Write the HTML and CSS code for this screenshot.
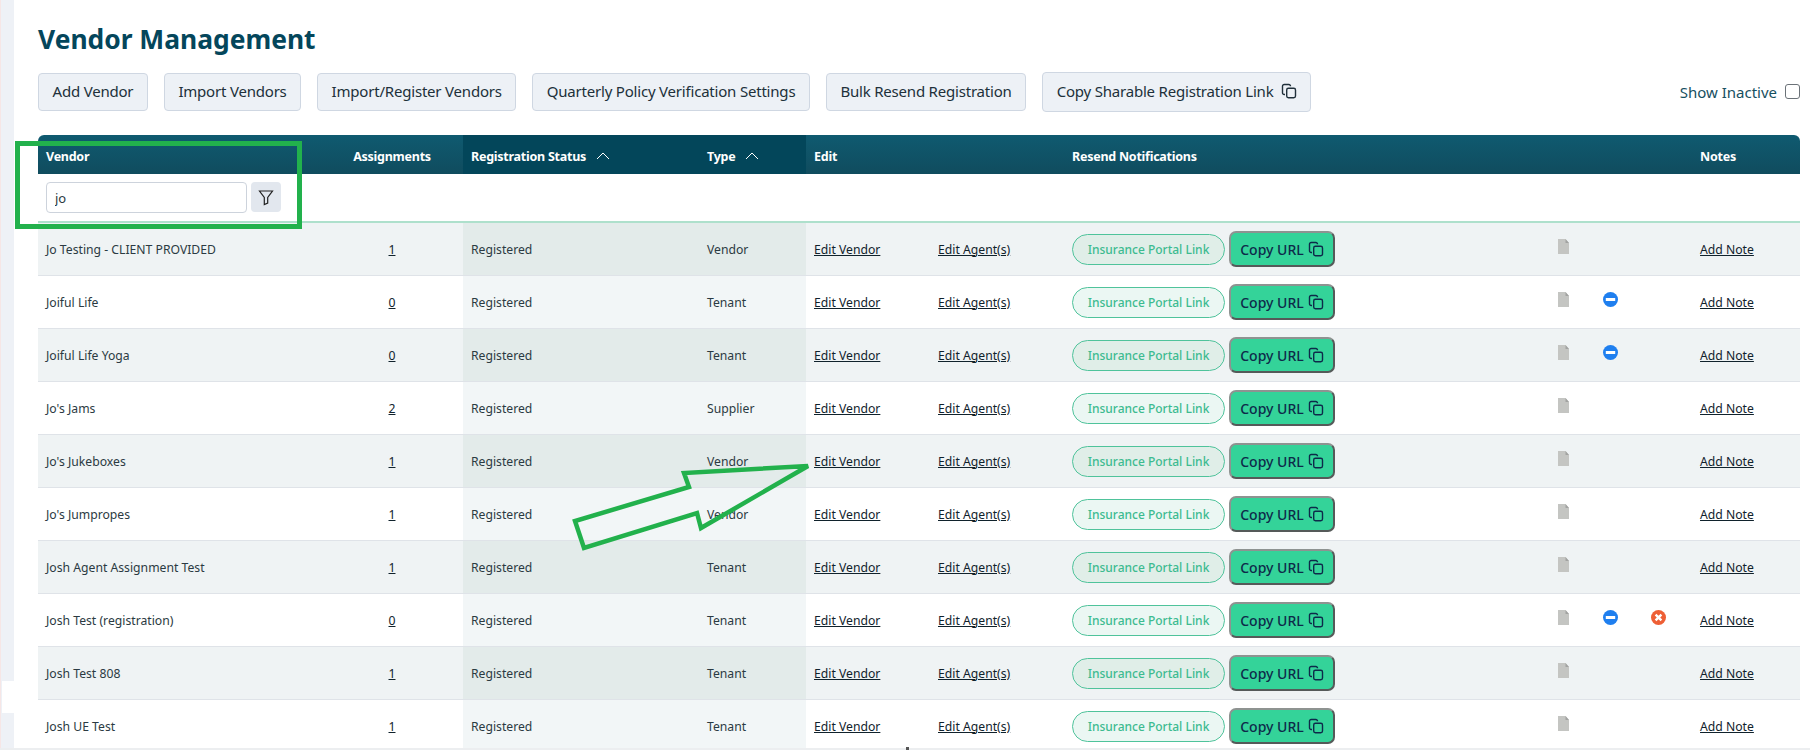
FILE: index.html
```html
<!DOCTYPE html>
<html>
<head>
	<title>Vendor Management</title>
	<link rel="stylesheet" href="styles.css">
</head>
<body>
	<svg class="iconDefs" width="0" height="0">
		<symbol id="iconCopy" viewBox="0 0 16 16">
			<path d="M4 11.5H3.2A1.7 1.7 0 0 1 1.5 9.8V3.2A1.7 1.7 0 0 1 3.2 1.5h4.6A1.7 1.7 0 0 1 9.5 3.2" fill="none" stroke="currentColor" stroke-width="1.4"/>
			<rect x="5.7" y="5.2" width="8.8" height="9.6" rx="1.7" fill="none" stroke="currentColor" stroke-width="1.4"/>
		</symbol>
		<symbol id="iconDoc" viewBox="0 0 11 15">
			<path d="M0 0H7.5L11 4V15H0Z" fill="#c4c5c2"/>
			<path d="M7.5 0L11 4H7.5Z" fill="#a2a3a1"/>
		</symbol>
		<symbol id="iconMinus" viewBox="0 0 15 15">
			<circle cx="7.5" cy="7.5" r="7.5" fill="#1f7fef"/>
			<rect x="2.8" y="6" width="9.4" height="3" fill="#fff"/>
		</symbol>
		<symbol id="iconCross" viewBox="0 0 15 15">
			<circle cx="7.5" cy="7.5" r="7.5" fill="#ee5f35"/>
			<path d="M4.6 4.6L10.4 10.4M10.4 4.6L4.6 10.4" stroke="#fff" stroke-width="2.4"/>
		</symbol>
		<symbol id="iconChevron" viewBox="0 0 14 8">
			<path d="M1 7L7 1L13 7" fill="none" stroke="currentColor" stroke-width="1"/>
		</symbol>
	</svg>

	<div class="sidebar">
		<div class="sidebarGap"></div>
	</div>

	<div class="main">
		<h1 class="pageTitle">Vendor Management</h1>

		<div class="toolbar">
			<button class="toolButton">Add Vendor</button>
			<button class="toolButton">Import Vendors</button>
			<button class="toolButton">Import/Register Vendors</button>
			<button class="toolButton">Quarterly Policy Verification Settings</button>
			<button class="toolButton">Bulk Resend Registration</button>
			<button class="toolButton toolButtonTall">Copy Sharable Registration Link <svg class="iconCopy"><use href="#iconCopy"/></svg></button>
			<label class="showInactive">Show Inactive <input type="checkbox"></label>
		</div>

		<table class="vendorTable">
			<colgroup>
				<col class="colVendor">
				<col class="colAssign">
				<col class="colStatus">
				<col class="colType">
				<col class="colEdit">
				<col class="colAgent">
				<col class="colResend">
				<col class="colDoc">
				<col class="colMinus">
				<col class="colCross">
				<col class="colNotes">
			</colgroup>
			<thead>
				<tr>
					<th>Vendor</th>
					<th class="center">Assignments</th>
					<th class="sorted">Registration Status <svg class="iconSort"><use href="#iconChevron"/></svg></th>
					<th class="sorted">Type <svg class="iconSort"><use href="#iconChevron"/></svg></th>
					<th colspan="2">Edit</th>
					<th colspan="4" class="resendHead">Resend Notifications</th>
					<th>Notes</th>
				</tr>
				<tr class="filterRow">
					<td colspan="11">
						<div class="filterBox">
							<input class="filterInput" type="text" value="jo">
							<button class="filterButton">
								<svg viewBox="0 0 16 16" width="16" height="18"><path d="M1.5 2H14.5L9.7 8.5V14L6.3 15.5V8.5Z" fill="none" stroke="#222" stroke-width="1.2"/></svg>
							</button>
						</div>
					</td>
				</tr>
			</thead>
			<tbody>
				<tr>
					<td>Jo Testing - CLIENT PROVIDED</td>
					<td class="center"><a href="#">1</a></td>
					<td class="sorted">Registered</td>
					<td class="sorted">Vendor</td>
					<td><a href="#">Edit Vendor</a></td>
					<td><a href="#">Edit Agent(s)</a></td>
					<td class="resendCell"><div class="resend"><a class="portalLink">Insurance Portal Link</a><button class="copyUrl">Copy URL <svg class="iconCopy"><use href="#iconCopy"/></svg></button></div></td>
					<td class="iconCell"><svg class="iconDoc"><use href="#iconDoc"/></svg></td>
					<td class="iconCell"></td>
					<td class="iconCell"></td>
					<td><a href="#">Add Note</a></td>
				</tr>
				<tr>
					<td>Joiful Life</td>
					<td class="center"><a href="#">0</a></td>
					<td class="sorted">Registered</td>
					<td class="sorted">Tenant</td>
					<td><a href="#">Edit Vendor</a></td>
					<td><a href="#">Edit Agent(s)</a></td>
					<td class="resendCell"><div class="resend"><a class="portalLink">Insurance Portal Link</a><button class="copyUrl">Copy URL <svg class="iconCopy"><use href="#iconCopy"/></svg></button></div></td>
					<td class="iconCell"><svg class="iconDoc"><use href="#iconDoc"/></svg></td>
					<td class="iconCell"><svg class="iconRound"><use href="#iconMinus"/></svg></td>
					<td class="iconCell"></td>
					<td><a href="#">Add Note</a></td>
				</tr>
				<tr>
					<td>Joiful Life Yoga</td>
					<td class="center"><a href="#">0</a></td>
					<td class="sorted">Registered</td>
					<td class="sorted">Tenant</td>
					<td><a href="#">Edit Vendor</a></td>
					<td><a href="#">Edit Agent(s)</a></td>
					<td class="resendCell"><div class="resend"><a class="portalLink">Insurance Portal Link</a><button class="copyUrl">Copy URL <svg class="iconCopy"><use href="#iconCopy"/></svg></button></div></td>
					<td class="iconCell"><svg class="iconDoc"><use href="#iconDoc"/></svg></td>
					<td class="iconCell"><svg class="iconRound"><use href="#iconMinus"/></svg></td>
					<td class="iconCell"></td>
					<td><a href="#">Add Note</a></td>
				</tr>
				<tr>
					<td>Jo's Jams</td>
					<td class="center"><a href="#">2</a></td>
					<td class="sorted">Registered</td>
					<td class="sorted">Supplier</td>
					<td><a href="#">Edit Vendor</a></td>
					<td><a href="#">Edit Agent(s)</a></td>
					<td class="resendCell"><div class="resend"><a class="portalLink">Insurance Portal Link</a><button class="copyUrl">Copy URL <svg class="iconCopy"><use href="#iconCopy"/></svg></button></div></td>
					<td class="iconCell"><svg class="iconDoc"><use href="#iconDoc"/></svg></td>
					<td class="iconCell"></td>
					<td class="iconCell"></td>
					<td><a href="#">Add Note</a></td>
				</tr>
				<tr>
					<td>Jo's Jukeboxes</td>
					<td class="center"><a href="#">1</a></td>
					<td class="sorted">Registered</td>
					<td class="sorted">Vendor</td>
					<td><a href="#">Edit Vendor</a></td>
					<td><a href="#">Edit Agent(s)</a></td>
					<td class="resendCell"><div class="resend"><a class="portalLink">Insurance Portal Link</a><button class="copyUrl">Copy URL <svg class="iconCopy"><use href="#iconCopy"/></svg></button></div></td>
					<td class="iconCell"><svg class="iconDoc"><use href="#iconDoc"/></svg></td>
					<td class="iconCell"></td>
					<td class="iconCell"></td>
					<td><a href="#">Add Note</a></td>
				</tr>
				<tr>
					<td>Jo's Jumpropes</td>
					<td class="center"><a href="#">1</a></td>
					<td class="sorted">Registered</td>
					<td class="sorted">Vendor</td>
					<td><a href="#">Edit Vendor</a></td>
					<td><a href="#">Edit Agent(s)</a></td>
					<td class="resendCell"><div class="resend"><a class="portalLink">Insurance Portal Link</a><button class="copyUrl">Copy URL <svg class="iconCopy"><use href="#iconCopy"/></svg></button></div></td>
					<td class="iconCell"><svg class="iconDoc"><use href="#iconDoc"/></svg></td>
					<td class="iconCell"></td>
					<td class="iconCell"></td>
					<td><a href="#">Add Note</a></td>
				</tr>
				<tr>
					<td>Josh Agent Assignment Test</td>
					<td class="center"><a href="#">1</a></td>
					<td class="sorted">Registered</td>
					<td class="sorted">Tenant</td>
					<td><a href="#">Edit Vendor</a></td>
					<td><a href="#">Edit Agent(s)</a></td>
					<td class="resendCell"><div class="resend"><a class="portalLink">Insurance Portal Link</a><button class="copyUrl">Copy URL <svg class="iconCopy"><use href="#iconCopy"/></svg></button></div></td>
					<td class="iconCell"><svg class="iconDoc"><use href="#iconDoc"/></svg></td>
					<td class="iconCell"></td>
					<td class="iconCell"></td>
					<td><a href="#">Add Note</a></td>
				</tr>
				<tr>
					<td>Josh Test (registration)</td>
					<td class="center"><a href="#">0</a></td>
					<td class="sorted">Registered</td>
					<td class="sorted">Tenant</td>
					<td><a href="#">Edit Vendor</a></td>
					<td><a href="#">Edit Agent(s)</a></td>
					<td class="resendCell"><div class="resend"><a class="portalLink">Insurance Portal Link</a><button class="copyUrl">Copy URL <svg class="iconCopy"><use href="#iconCopy"/></svg></button></div></td>
					<td class="iconCell"><svg class="iconDoc"><use href="#iconDoc"/></svg></td>
					<td class="iconCell"><svg class="iconRound"><use href="#iconMinus"/></svg></td>
					<td class="iconCell"><svg class="iconRound"><use href="#iconCross"/></svg></td>
					<td><a href="#">Add Note</a></td>
				</tr>
				<tr>
					<td>Josh Test 808</td>
					<td class="center"><a href="#">1</a></td>
					<td class="sorted">Registered</td>
					<td class="sorted">Tenant</td>
					<td><a href="#">Edit Vendor</a></td>
					<td><a href="#">Edit Agent(s)</a></td>
					<td class="resendCell"><div class="resend"><a class="portalLink">Insurance Portal Link</a><button class="copyUrl">Copy URL <svg class="iconCopy"><use href="#iconCopy"/></svg></button></div></td>
					<td class="iconCell"><svg class="iconDoc"><use href="#iconDoc"/></svg></td>
					<td class="iconCell"></td>
					<td class="iconCell"></td>
					<td><a href="#">Add Note</a></td>
				</tr>
				<tr>
					<td>Josh UE Test</td>
					<td class="center"><a href="#">1</a></td>
					<td class="sorted">Registered</td>
					<td class="sorted">Tenant</td>
					<td><a href="#">Edit Vendor</a></td>
					<td><a href="#">Edit Agent(s)</a></td>
					<td class="resendCell"><div class="resend"><a class="portalLink">Insurance Portal Link</a><button class="copyUrl">Copy URL <svg class="iconCopy"><use href="#iconCopy"/></svg></button></div></td>
					<td class="iconCell"><svg class="iconDoc"><use href="#iconDoc"/></svg></td>
					<td class="iconCell"></td>
					<td class="iconCell"></td>
					<td><a href="#">Add Note</a></td>
				</tr>
			</tbody>
		</table>
	</div>

	<!-- annotations drawn on top of the screenshot -->
	<div class="markBox"></div>
	<svg class="markArrow" width="1810" height="750">
		<polygon points="808,466 684,473 689,487 575,521 584,548 697,513 701,528" fill="none" stroke="#22b14c" stroke-width="4.5"/>
	</svg>
	<div class="bottomEdge"><span class="bottomTick"></span></div>
</body>
</html>
```

FILE: styles.css
```css
* {
	box-sizing: border-box;
}

html, body {
	height: 750px;
	margin: 0;
	overflow: hidden;
}

body {
	background: #fff;
	color: #2b3a42;
	display: flex;
	font-family: "Noto Sans", "Open Sans", sans-serif;
	font-size: 12.2px;
}

.iconDefs {
	position: absolute;
}

.sidebar {
	background: #eef1f6;
	border-left: 1px solid #f6e6e6;
	flex: 0 0 14px;
	padding-top: 681px;
}

.sidebarGap {
	background: #fff;
	height: 32px;
	margin-left: 1px;
}

.main {
	flex: 1;
	min-width: 0;
	padding: 0 10px 0 24px;
}

.pageTitle {
	color: #04465b;
	font-size: 26.4px;
	font-weight: 700;
	height: 72px;
	line-height: 36px;
	margin: 0;
	padding-top: 21px;
}

.toolbar {
	align-items: center;
	display: flex;
	gap: 16px;
	height: 39px;
	margin-bottom: 24px;
}

.toolButton {
	align-items: center;
	background: #edf1f6;
	border: 1px solid #cfd7e2;
	border-radius: 4px;
	color: #20303a;
	display: flex;
	font-family: inherit;
	font-size: 15px;
	gap: 7px;
	height: 38px;
	letter-spacing: -0.2px;
	padding: 0 13.5px 2px;
	white-space: nowrap;
}

.toolButtonTall {
	height: 40px;
}

.iconCopy {
	flex: none;
	height: 16px;
	vertical-align: -3px;
	width: 16px;
}

.showInactive {
	align-items: center;
	color: #17505f;
	display: flex;
	font-size: 15px;
	gap: 8px;
	margin-left: auto;
}

.showInactive input {
	appearance: none;
	background: #fff;
	border: 1px solid #6b7278;
	border-radius: 3px;
	height: 15px;
	margin: 0;
	width: 15px;
}

.vendorTable {
	border-collapse: separate;
	border-spacing: 0;
	table-layout: fixed;
	width: 1762px;
}

.colVendor { width: 283px; }
.colAssign { width: 142px; }
.colStatus { width: 236px; }
.colType { width: 107px; }
.colEdit { width: 124px; }
.colAgent { width: 134px; }
.colResend { width: 486px; }
.colDoc { width: 45px; }
.colMinus { width: 48px; }
.colCross { width: 49px; }
.colNotes { width: 108px; }

.vendorTable thead th {
	background: linear-gradient(#0f5a70, #104c5e);
	color: #fff;
	font-size: 12.5px;
	font-weight: 700;
	height: 39px;
	letter-spacing: -0.25px;
	padding: 4px 8px 0;
	text-align: left;
	white-space: nowrap;
}

.vendorTable thead th:first-child {
	border-top-left-radius: 6px;
}

.vendorTable thead th:last-child {
	border-top-right-radius: 6px;
}

.vendorTable thead th.sorted {
	background: #03465a;
}

.vendorTable thead th.center {
	text-align: center;
}

.vendorTable thead th.resendHead {
	padding-left: 8px;
}

.iconSort {
	height: 8px;
	margin-left: 7px;
	vertical-align: 1px;
	width: 14px;
}

.filterRow td {
	border-bottom: 2px solid #aee0cc;
	height: 49px;
	padding: 8px 0 0 8px;
	vertical-align: top;
}

.filterBox {
	align-items: flex-start;
	display: flex;
	gap: 4px;
}

.filterInput {
	border: 1px solid #cdd3dc;
	border-radius: 4px;
	color: #2b3a42;
	font-family: inherit;
	font-size: 13px;
	height: 31px;
	padding: 0 8px;
	width: 201px;
}

.filterButton {
	align-items: center;
	background: #e2e7ee;
	border: 0;
	border-radius: 4px;
	display: flex;
	height: 30px;
	justify-content: center;
	padding: 0;
	width: 30px;
}

.vendorTable tbody td {
	background: #fff;
	border-bottom: 1px solid #dfe3e8;
	height: 53px;
	padding: 0 8px;
	white-space: nowrap;
}

.vendorTable tbody tr:nth-child(odd) td {
	background: #eff3f4;
}

.vendorTable tbody td.sorted {
	background: #f2f6f7;
}

.vendorTable tbody tr:nth-child(odd) td.sorted {
	background: #e3ebea;
}

.vendorTable td.center {
	text-align: center;
}

.vendorTable a[href] {
	color: #10222c;
	text-decoration: underline;
}

.resend {
	align-items: center;
	display: flex;
	gap: 4px;
}

.portalLink {
	background: #ebf7f3;
	border: 1px solid #4fc39b;
	border-radius: 16px;
	color: #3dbb90;
	flex: 0 0 153px;
	font-size: 12px;
	font-weight: 500;
	height: 31px;
	line-height: 29px;
	text-align: center;
}

.vendorTable tbody tr:nth-child(odd) .portalLink {
	background: #e0eee8;
}

.copyUrl {
	align-items: center;
	background: #34d399;
	border: 2px solid #8e9391;
	border-bottom-color: #555a59;
	border-right-color: #555a59;
	border-radius: 7px;
	color: #0e2a4a;
	display: flex;
	flex: 0 0 106px;
	font-family: inherit;
	font-size: 14px;
	font-weight: 500;
	gap: 4px;
	height: 36px;
	justify-content: center;
	padding: 0;
}

.iconCell {
	text-align: left;
}

.iconDoc {
	display: block;
	height: 15px;
	margin: -5px 0 0 0;
	width: 11px;
}

.iconRound {
	display: block;
	height: 15px;
	margin: -5px 0 0 0;
	width: 15px;
}

.markBox {
	border: 5px solid #22b14c;
	height: 88px;
	left: 15px;
	position: absolute;
	top: 141px;
	width: 287px;
}

.markArrow {
	left: 0;
	pointer-events: none;
	position: absolute;
	top: 0;
}

.bottomEdge {
	background: #eceef0;
	bottom: 0;
	height: 2px;
	left: 0;
	position: absolute;
	right: 0;
}

.bottomTick {
	background: #555;
	bottom: 0;
	height: 3px;
	left: 906px;
	position: absolute;
	width: 3px;
}
```
